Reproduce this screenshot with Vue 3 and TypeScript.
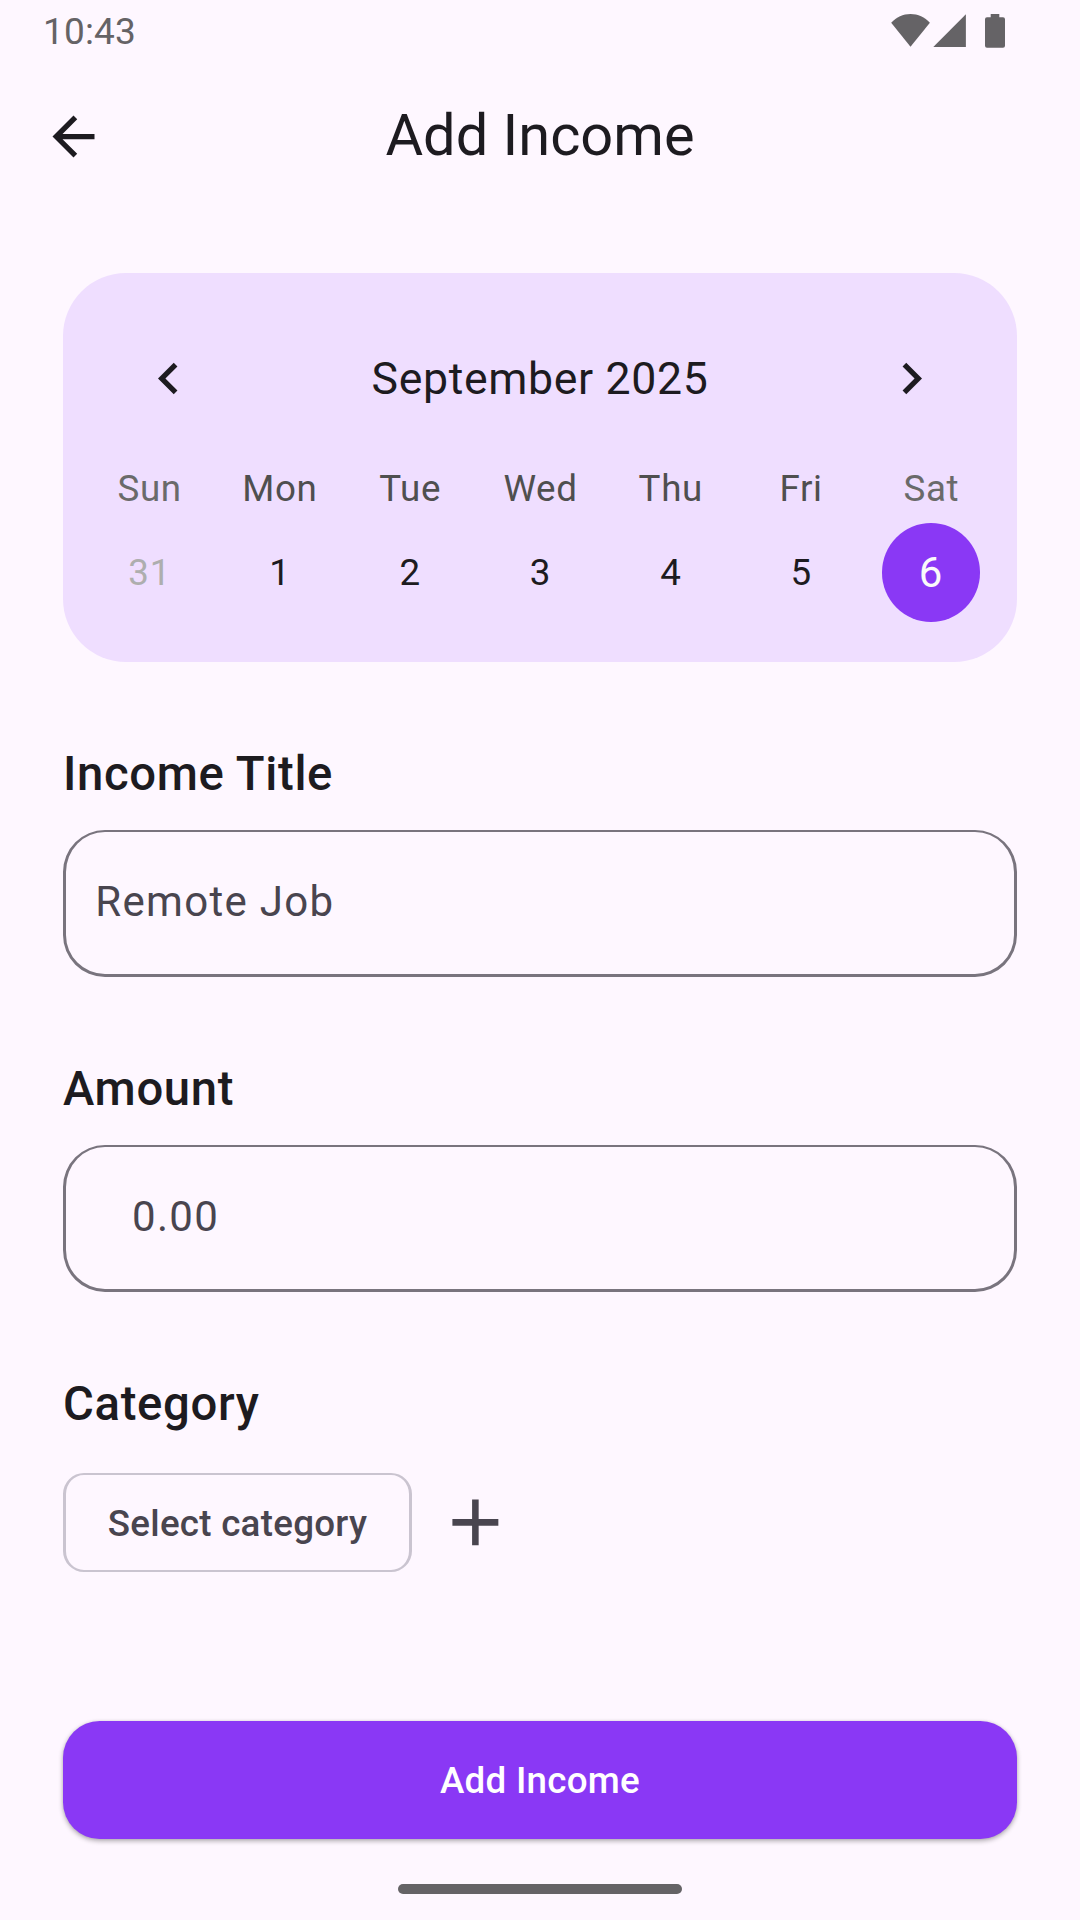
<script setup lang="ts">
interface Day {
  name: string
  date: number
  weekend?: boolean
  outside?: boolean
  selected?: boolean
}

const days: Day[] = [
  { name: 'Sun', date: 31, weekend: true, outside: true },
  { name: 'Mon', date: 1 },
  { name: 'Tue', date: 2 },
  { name: 'Wed', date: 3 },
  { name: 'Thu', date: 4 },
  { name: 'Fri', date: 5 },
  { name: 'Sat', date: 6, weekend: true, selected: true },
]
</script>

<template>
  <div class="screen">
    <div class="status">
      <span class="clock">10:43</span>
      <svg class="status-icons" width="116" height="36" viewBox="0 0 116 36" fill="#656366">
        <path d="M1.200 9.800C6.500 4 13 1 20.500 1S34.700 4 39.900 9.800L20.500 33.800Z" />
        <path d="M75.900 1.200V34H43.300Z" />
        <path d="M100.700 1h8.600v3.300h3.700a2 2 0 0 1 2 2v26.500a2 2 0 0 1-2 2h-16a2 2 0 0 1-2-2v-26.500a2 2 0 0 1 2-2h3.700z" />
      </svg>
    </div>

    <header class="app-bar">
      <svg class="icon" viewBox="0 0 24 24" fill="#1d1b20">
        <path d="M20 11H7.830l5.590-5.590L12 4l-8 8 8 8 1.410-1.410L7.830 13H20v-2z" />
      </svg>
      <h1>Add Income</h1>
    </header>

    <main>
      <section class="calendar">
        <div class="month">
          <svg class="icon" viewBox="0 0 24 24" fill="#1d1b20">
            <path d="M15.410 7.410L14 6l-6 6 6 6 1.410-1.410L10.830 12z" />
          </svg>
          <span class="month-name">September 2025</span>
          <svg class="icon" viewBox="0 0 24 24" fill="#1d1b20">
            <path d="M10 6L8.590 7.410 13.170 12l-4.580 4.590L10 18l6-6z" />
          </svg>
        </div>
        <div class="week names">
          <span v-for="d in days" :key="d.name" :class="{ weekend: d.weekend }">{{ d.name }}</span>
        </div>
        <div class="week dates">
          <span v-for="d in days" :key="d.date" :class="{ outside: d.outside, selected: d.selected }">{{ d.date }}</span>
        </div>
      </section>

      <h2>Income Title</h2>
      <div class="field"><span>Remote Job</span></div>

      <h2>Amount</h2>
      <div class="field amount"><span>0.00</span></div>

      <h2>Category</h2>
      <div class="category">
        <button class="chip">Select category</button>
        <svg class="plus" viewBox="0 0 24 24" fill="#49454f">
          <path d="M19 13h-6v6h-2v-6H5v-2h6V5h2v6h6v2z" />
        </svg>
      </div>
    </main>

    <button class="submit">Add Income</button>
    <div class="nav-handle"></div>
  </div>
</template>

<style>
body {
  margin: 0;
  background: #fef7ff;
}
</style>

<style scoped>
.screen {
  width: 1080px;
  height: 1920px;
  display: flex;
  flex-direction: column;
  overflow: hidden;
  background: #fef7ff;
  color: #1d1b20;
  font-family: Roboto, "Liberation Sans", sans-serif;
}
.screen * {
  box-sizing: border-box;
}
h1,
h2 {
  margin: 0;
}
button {
  font-family: inherit;
  margin: 0;
  padding: 0;
}
.icon {
  width: 63px;
  height: 63px;
  display: block;
  flex: none;
}
.status {
  height: 63px;
  flex: none;
  display: flex;
  justify-content: space-between;
  padding: 0 74px 0 43px;
  color: #656366;
}
.clock {
  font-size: 37px;
  line-height: 63px;
  letter-spacing: 0.15px;
}
.status-icons {
  margin-top: 13px;
}
.app-bar {
  height: 147px;
  flex: none;
  display: flex;
  align-items: center;
  padding: 0 42px;
}
.app-bar h1 {
  flex: 1;
  margin-right: 63px;
  padding-bottom: 4px;
  text-align: center;
  font-size: 57.75px;
  line-height: 74px;
  font-weight: 400;
}
main {
  flex: none;
  display: flex;
  flex-direction: column;
  padding: 63px 63px 0;
}
.calendar {
  height: 388.5px;
  padding: 74px 21px 0;
  border-radius: 63px;
  background: #efdeff;
}
.month {
  display: flex;
  align-items: center;
  justify-content: space-between;
  height: 63px;
  padding: 0 52.5px;
}
.month-name {
  padding-top: 2px;
  font-size: 44.625px;
  line-height: 61px;
  letter-spacing: 0.656px;
}
.week {
  display: grid;
  grid-template-columns: repeat(7, 1fr);
  justify-items: center;
  align-items: center;
  font-size: 36.75px;
  letter-spacing: 0.656px;
}
.week span:not(.selected) {
  padding-left: 1px;
}
.names {
  height: 50px;
  margin-top: 53px;
  color: #4f4f4f;
}
.names .weekend {
  color: #6a6a6a;
}
.dates {
  height: 99px;
  margin-top: 9.500px;
}
.dates .outside {
  color: #aeaeae;
}
.dates .selected {
  width: 98.500px;
  height: 99px;
  border-radius: 50%;
  background: #8a38f5;
  color: #fafafa;
  font-size: 42px;
  line-height: 100px;
  text-align: center;
}
h2 {
  height: 60px;
  line-height: 60px;
  margin-top: 82.500px;
  font-size: 47.250px;
  font-weight: 500;
  letter-spacing: 0.656px;
}
.field {
  height: 147px;
  margin-top: 26px;
  border: 3px solid #79747e;
  border-top-width: 2px;
  border-radius: 42px;
  padding: 0 29.300px;
  font-size: 42px;
  line-height: 140px;
  letter-spacing: 1.312px;
  color: #49454f;
}
.amount {
  padding-left: 66px;
}
.field + h2 {
  margin-top: 82px;
}
.category {
  display: flex;
  align-items: center;
  gap: 23.500px;
  margin-top: 39px;
}
.chip {
  width: 349px;
  height: 99px;
  padding-top: 2px;
  border: 2px solid #cac4d0;
  border-left-width: 3px;
  border-right-width: 3px;
  border-radius: 21px;
  background: transparent;
  color: #49454f;
  font-size: 36.750px;
  font-weight: 500;
  letter-spacing: 0.262px;
}
.plus {
  width: 78.750px;
  height: 78.750px;
}
.submit {
  flex: none;
  height: 118px;
  margin: auto 63px 0;
  border: 0;
  border-radius: 36.750px;
  background: #8a38f5;
  color: #fff;
  font-size: 36.750px;
  font-weight: 500;
  letter-spacing: 0.262px;
  box-shadow: 0 2px 5px rgba(0, 0, 0, 0.32), 0 0 3px rgba(0, 0, 0, 0.06);
}
.nav-handle {
  flex: none;
  width: 284px;
  height: 10px;
  margin: 45px auto 26px;
  border-radius: 5px;
  background: #656366;
}
</style>
